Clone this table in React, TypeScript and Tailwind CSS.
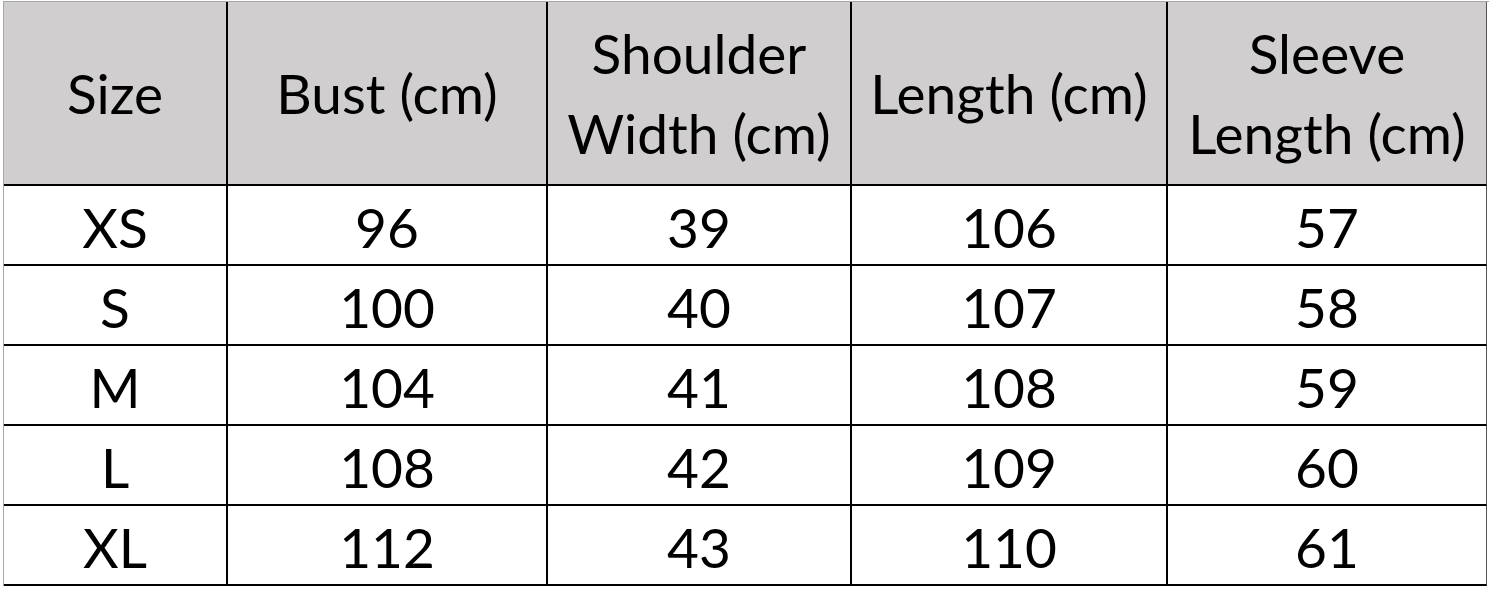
const headers = ["Size", "Bust (cm)", "Shoulder Width (cm)", "Length (cm)", "Sleeve Length (cm)"];

const rows = [
  ["XS", "96", "39", "106", "57"],
  ["S", "100", "40", "107", "58"],
  ["M", "104", "41", "108", "59"],
  ["L", "108", "42", "109", "60"],
  ["XL", "112", "43", "110", "61"],
];

const headerLabels: React.ReactNode[] = [
  "Size",
  "Bust (cm)",
  <>Shoulder<br />Width (cm)</>,
  "Length (cm)",
  <>Sleeve<br />Length (cm)</>,
];

export default function App() {
  return (
    <div className="w-[1489px] h-[589px] bg-white pl-[3px] pt-px overflow-hidden font-['Lato','Liberation_Sans',sans-serif] text-black">
      <div className="grid grid-cols-[224px_320px_304px_316px_319px] border-l border-t border-[#a6a6a6]">
        {headerLabels.map((label, i) => (
          <div
            key={headers[i]}
            className={`h-[184px] bg-[#d0cece] flex items-center justify-center text-center text-[55px] leading-[80px] border-b-2 border-black ${
              i < 4 ? "border-r-2" : "border-r border-r-[#555]"
            }`}
          >
            <span>{label}</span>
          </div>
        ))}
        {rows.map((row) =>
          row.map((cell, i) => (
            <div
              key={row[0] + i}
              className={`h-[80px] flex items-center justify-center text-[55px] pt-1 border-b-2 border-black ${
                i < 4 ? "border-r-2" : "border-r border-r-[#555]"
              }`}
            >
              {cell}
            </div>
          ))
        )}
      </div>
    </div>
  );
}
